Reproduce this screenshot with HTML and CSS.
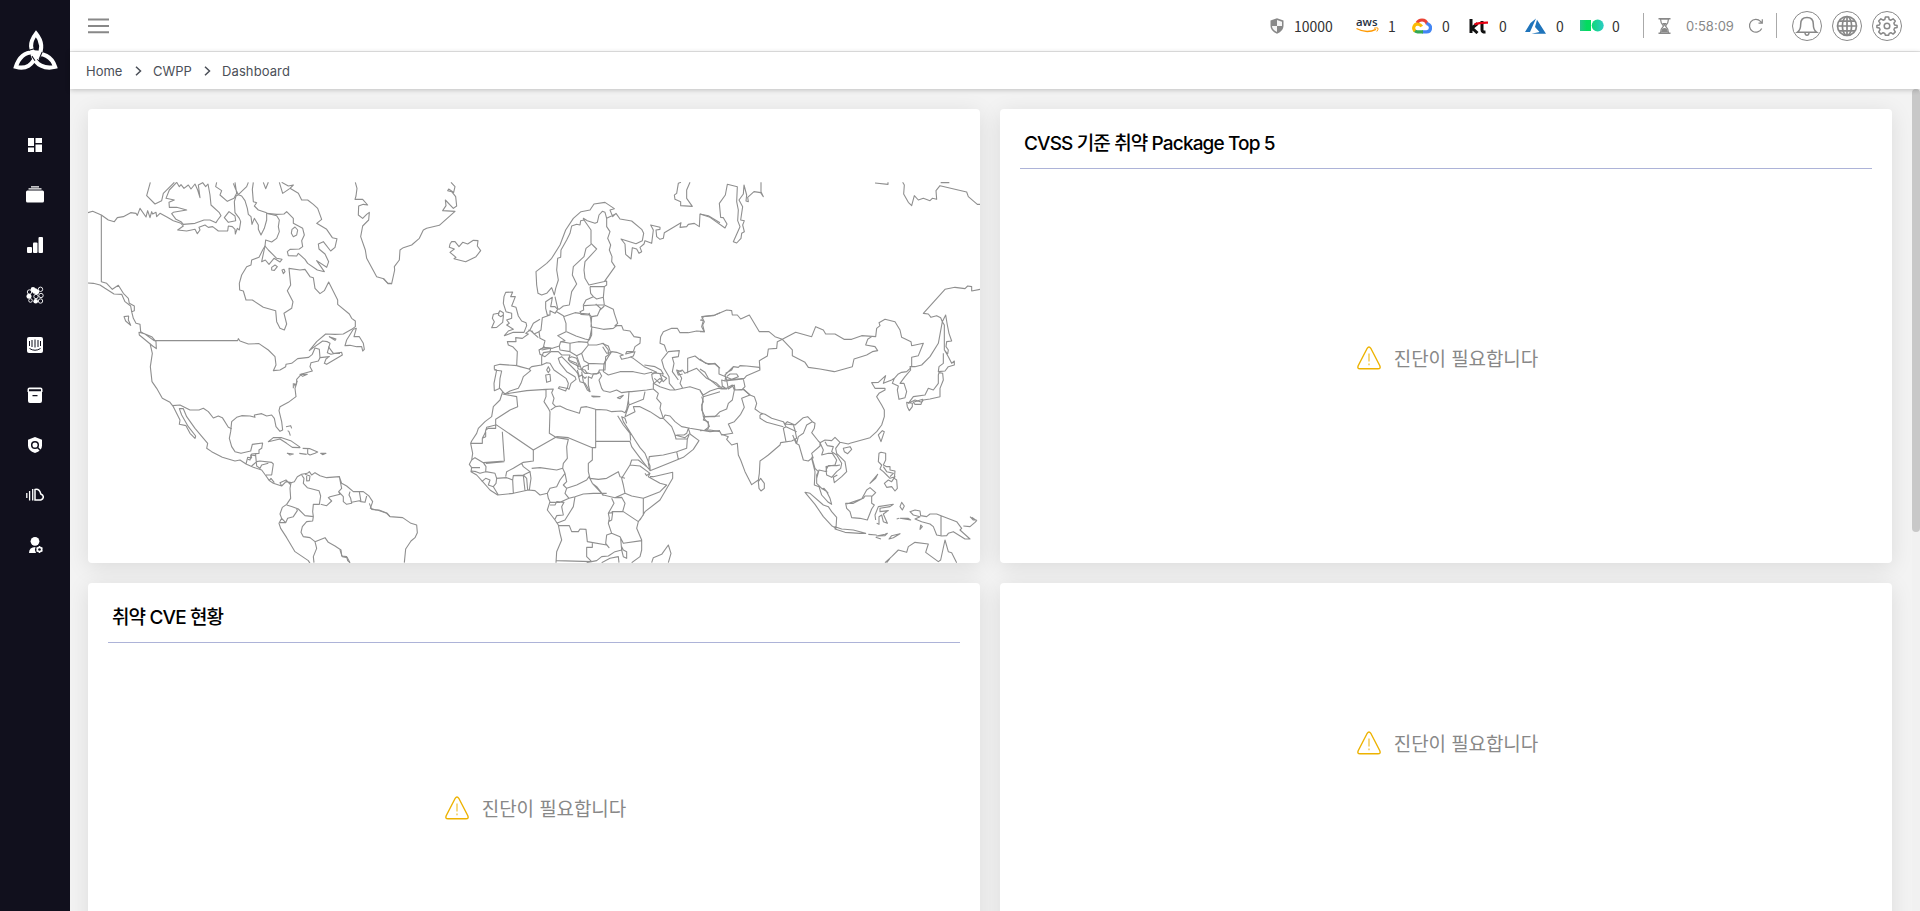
FILE: index.html
```html
<!DOCTYPE html>
<html lang="ko">
<head>
<meta charset="utf-8">
<title>CWPP Dashboard</title>
<link rel="stylesheet" href="styles.css">
</head>
<body>
<div class="app">
  <aside class="sidebar">
    <svg class="logo" viewBox="0 0 44 40" fill="none" stroke="#fff" stroke-width="4">
      <path d="M22.500 3.500C16 12 15.500 20 24.500 26.500C29 19 28.500 11 22.500 3.500Z" stroke-linejoin="miter"/>
      <path d="M2.800 36C12 38.500 20 35 23.500 22C13 20.500 6 26 2.800 36Z"/>
      <path d="M41.200 36C38 26 29 21 19.500 25C22 34 31 38.500 41.200 36Z"/>
      <path d="M15.500 19.800L21 18.200M28.500 21.500L25.500 28.500M21.500 30L18.500 25.500" stroke="#11101d" stroke-width="1"/>
    </svg>
    <nav class="nav">
      <svg viewBox="0 0 18 18"><path d="M2 2h6v8H2zM9.500 2H16v5H9.500zM2 11.500h6V16H2zM9.500 8.500H16V16H9.500z"/></svg>
      <svg viewBox="0 0 18 18"><path d="M5 .3h8v1.200H5zM2.500 2.300h13v1.300h-13z"/><rect y="4.600" width="18" height="12" rx="1.500"/></svg>
      <svg viewBox="0 0 18 18"><rect x="1" y="11" width="5" height="6" rx="1"/><rect x="7" y="6.500" width="4.500" height="10.500" rx="1"/><rect x="12.500" y="1" width="4.500" height="16" rx="1"/></svg>
      <svg viewBox="0 0 18 18"><g stroke="#fff" stroke-width=".9" fill="none"><circle cx="3.500" cy="6" r="2.200"/><circle cx="14.500" cy="3.300" r="2.200"/><circle cx="15" cy="9.500" r="2.200"/><circle cx="10" cy="10.500" r="2.200"/><circle cx="14.500" cy="15" r="2.200"/><circle cx="4.500" cy="14.500" r="1.800"/></g><circle cx="7" cy="3.300" r="2.300"/><circle cx="3" cy="10.300" r="2.500"/><circle cx="10.700" cy="5.700" r="2.500"/><circle cx="9.700" cy="15.300" r="2.300"/><path d="M5 5l5-3 2 3-4 3z"/></svg>
      <svg viewBox="0 0 18 18"><rect x="1" y="1" width="16" height="16" rx="2"/><path d="M3.500 5v5M6 4v7M9 3.500v8M12 4v7M14.500 5v5M3.500 12.500q5.500 3.500 11 0" fill="none" stroke="#11101d" stroke-width="1"/></svg>
      <svg viewBox="0 0 18 18"><path d="M1.500 3.500q0-2 2-2h11q2 0 2 2V6H16v9q0 2-2 2H4q-2 0-2-2V6h-.500z"/><path d="M3 3.200h12v2H3zM6.500 9h5v1.200h-5z" fill="#11101d"/></svg>
      <svg viewBox="0 0 18 18"><path d="M9 1l7 2.700v6q0 5-7 7.300-7-2.300-7-7.300v-6z"/><circle cx="9" cy="9" r="3.300" fill="none" stroke="#11101d" stroke-width="1.500"/><path d="M11.300 11.300l4 4" stroke="#11101d" stroke-width="1.500"/></svg>
      <svg viewBox="0 0 18 18"><path d="M.800 7v5M3.600 5v9.500M6.700 3v11.500" fill="none" stroke="#fff" stroke-width="1.300"/><path d="M9 3.500q4.500-1 5.800 4.500 2.500 1 2.500 3t-2.500 3H9z" fill="none" stroke="#fff" stroke-width="1.500"/></svg>
      <svg viewBox="0 0 18 18"><circle cx="9" cy="5.300" r="4.400"/><path d="M3 17q0-6 6.500-6-1.500 3 .5 6z"/><circle cx="13.500" cy="13.500" r="2.300" fill="none" stroke="#fff" stroke-width="1.500"/><path d="M13.500 10v7M10.500 11.700l6 3.500M10.500 15.300l6-3.500" stroke="#fff" stroke-width="1.200"/><circle cx="13.500" cy="13.500" r="1.200" fill="#11101d"/></svg>
    </nav>
  </aside>

  <div class="main">
    <header class="topbar">
      <svg class="burger" viewBox="0 0 21 16"><path d="M0 1.500h21M0 8h21M0 14.300h21" stroke="#888" stroke-width="2"/></svg>
      <div class="status">
        <svg class="shield" viewBox="0 0 14 16"><path d="M7 .3L13.500 2.500V8q0 5-6.500 7.700Q.500 13 .500 8V2.500z" fill="#888"/><path d="M7 2l5 1.700V8H7zM2 8h5v6Q2 11.500 2 8z" fill="#f4f4f4"/></svg>
        <span class="count total">10000</span>
        <svg class="aws" viewBox="0 -5 23 26"><text x="0" y="8" textLength="21.500" lengthAdjust="spacingAndGlyphs" class="aws-text">aws</text><path d="M.500 10.500q10 5.500 19.500.8" fill="none" stroke="#f90" stroke-width="1.400"/><path d="M18 10.200q3.500-.8 4 0t-1.200 3.300" fill="none" stroke="#f90"/></svg>
        <span class="count n1">1</span>
        <svg class="gcp" viewBox="0 0 20 16" fill="none" stroke-width="3.200"><path d="M5 5Q6.500 2 10 2q4 0 5.200 4" stroke="#ea4335"/><path d="M14.500 5.500q4 1 4 4.300 0 4-4 4H10" stroke="#4285f4"/><path d="M11 13.800H5.500q-2 0-3-1.200" stroke="#34a853"/><path d="M3 13Q1 11 2 8.500q1.200-3 4.500-2.300 2 .4 3.200 2.300" stroke="#fbbc05"/></svg>
        <span class="count n2">0</span>
        <svg class="kt" viewBox="0 0 20 16" fill="none"><path d="M2 1v14M8.500 5.500L3 10l5.500 5M13 3v9q0 2.200 3.500 2" stroke="#111" stroke-width="3"/><path d="M5.500 6.500q5-2 13.500-1.800" stroke="#e60012" stroke-width="2.200"/></svg>
        <span class="count n3">0</span>
        <svg class="azure" viewBox="0 0 21 16" fill="#1f74bb"><path d="M11 .5L5.500 5 0 14h5zM12 1.800l9 14H6.500l8-1.800-4.500-5z"/></svg>
        <span class="count n4">0</span>
        <svg class="ncp" viewBox="0 0 24 13"><defs><linearGradient id="g1"><stop stop-color="#29c58c"/><stop offset=".6" stop-color="#03dc5f"/></linearGradient><linearGradient id="g2"><stop stop-color="#10d877"/><stop offset="1" stop-color="#2accc4"/></linearGradient></defs><rect y="1" width="11" height="11" fill="url(#g1)"/><circle cx="17.700" cy="6.500" r="6" fill="url(#g2)"/></svg>
        <span class="count n5">0</span>
        <i class="rule"></i>
        <svg class="glass" viewBox="0 0 13 16"><path d="M.500.8h12M.500 15.200h12" stroke="#888" stroke-width="1.400"/><path d="M2.500 1Q2.500 5 5.500 8 2.500 11 2.500 15h8q0-4-3-7 3-3 3-7z" fill="none" stroke="#888" stroke-width="1.200"/><path d="M4 5h5L6.500 8zM3 14q.5-4 3.500-4t3.500 4z" fill="#888"/></svg>
        <span class="timer">0:58:09</span>
        <svg class="reload" viewBox="0 0 16 16" fill="none" stroke="#888" stroke-width="1.200"><path d="M13.700 10.500A6.400 6.400 0 1 1 12.500 3.300L14 5M14.300 1.300V5.200H10.500"/></svg>
        <i class="rule second"></i>
        <svg class="round" viewBox="0 0 30 30"><circle cx="15" cy="15" r="14.500"/><path d="M5.500 21.200Q8.700 19 8.700 13q0-6.500 6.300-6.500T21.300 13q0 6 3.200 8.200z" stroke-width="1.500"/><path d="M13 22q.3 2.200 2 2.200t2-2.200" stroke-width="1.500"/></svg>
        <svg class="round" viewBox="0 0 30 30"><circle cx="15" cy="15" r="14.500"/><g stroke-width="1.700"><circle cx="15" cy="15" r="9.500"/><ellipse cx="15" cy="15" rx="4.600" ry="9.500"/><path d="M5.500 15h19M15 5.500v19M7 10.200h16M7 19.800h16"/></g></svg>
        <svg class="round" viewBox="0 0 30 30"><circle cx="15" cy="15" r="14.500"/><circle cx="15" cy="15" r="2.800" stroke-width="1.500"/><path stroke-width="1.500" stroke-linejoin="round" d="M13.400 6h3.200l.6 2.500 1.700.7 2.200-1.400 2.200 2.200-1.400 2.200.7 1.700 2.500.6v1.900l-2.500.6-.7 1.700 1.400 2.200-2.200 2.200-2.200-1.400-1.700.7-.6 1.900h-3.200l-.6-1.900-1.700-.7-2.200 1.400-2.200-2.200 1.400-2.200-.7-1.700-2.500-.6v-1.900l2.500-.6.7-1.700-1.400-2.200 2.200-2.200 2.200 1.400 1.700-.7z"/></svg>
      </div>
    </header>

    <div class="crumbs">
      <span class="c1">Home</span>
      <svg viewBox="0 0 7 10"><path d="M1 .8L5.500 5 1 9.200"/></svg>
      <span class="c2">CWPP</span>
      <svg viewBox="0 0 7 10"><path d="M1 .8L5.500 5 1 9.200"/></svg>
      <span class="c3">Dashboard</span>
    </div>

    <div class="content">
      <div class="grid">
        <section class="card map-card">
          <svg class="map" viewBox="88 182 892 381">
            <!-- North and Central America -->
            <g transform="translate(80 170) scale(.33333)">
              <path d="M24,128 38,124 64,135 85,150 103,155 112,143 130,140 152,128 168,130 172,136 180,115 198,141 203,122 210,143 215,125 218,132 228,127 230,140 240,130 262,142 280,152 303,160 310,168 293,180 320,183 345,178 352,191 360,180 357,172 375,165 385,172 398,170 415,183 443,183 445,168 457,170 465,178 466,192 472,175 478,180 482,155 478,145 465,128 463,95 468,78 475,74 485,78 495,92 502,115 505,133 513,140 516,163 523,145 535,165 535,178 543,195 553,175 560,150 560,130 590,137 598,150 595,170 598,185 590,205 575,216 557,210 555,228 548,240 537,262 515,270 513,285 500,290 485,315 478,340 479,360 490,363 498,390 517,390 550,412 587,422 590,455 600,475 613,480 620,462 612,430 635,415 639,395 622,362 632,345 627,295 660,300 675,298 690,320 700,323 705,355 720,371 733,362 746,336 773,390 773,403 808,432 815,445 826,453 826,470 815,478 790,492 765,493 737,492 710,515 688,542 700,533 728,513 742,515 750,520 742,548 753,553 768,550 785,547 787,555 740,583 733,580 738,567 748,560 720,563 715,573 693,578 690,590 697,603 665,612 650,628 650,640 645,655 648,680 625,697 600,710 597,722 605,755 608,780 600,784 588,770 583,745 575,735 560,738 545,731 523,735 525,742 510,738 485,737 470,742 455,755 452,785 448,805 455,830 465,845 483,850 512,843 517,823 548,819 545,835 537,840 537,850 515,852 510,870 503,868"/>
              <path d="M64,135V335L80,340 97,358 115,346 130,370 145,385 148,400 163,408 163,422 155,425 152,408 135,395 125,373 102,372 75,355 60,345 40,340 24,339M155,425 160,445 168,460 180,463 182,485 190,490 215,500 228,515 229,536 218,528 178,495 177,487 195,492 222,512H473L475,506 480,513 505,522 537,521 565,540 585,560 588,585 580,602 600,600 617,590 618,583 635,580 653,566 686,562 697,553 705,534 718,538 720,563M132,440 146,438 145,450 152,466 137,453ZM210,520 217,550 211,590 216,635 230,655 247,685 270,697 280,710 300,750 298,763 318,767 330,790 345,805 347,798 325,770 305,735 298,716 310,716 320,740 345,775 383,820 380,835 395,845 427,862 465,873 480,870 498,882 520,892 545,900 556,915 568,932 580,940 605,948 618,935 633,938 643,935 652,920 665,913 682,910M278,707 300,705 330,720 357,720 370,715 385,725 400,744 415,738 427,743 445,772 455,776M498,882 503,862 515,864 512,855 527,857 527,850M515,888 530,875 540,873 575,877 580,882 575,915 558,915M527,857 530,888 540,895 545,885 565,880M568,932 573,925 583,938M605,948 600,938 618,930 632,945"/>
              <path d="M211,37 200,77 225,102 245,92 250,70 283,37M290,37 268,60 258,85 283,90 267,97 268,112 290,112 320,120 280,127 275,131 288,148 303,155 310,163 345,160 372,150 390,150 408,158 413,150 423,137 418,128 393,105 390,75 384,42 377,50 368,38 355,45 360,83 353,60 345,42 333,57 325,45 312,55 303,44 298,50 290,37M410,37 407,50 425,62 420,75 442,94 462,85 470,70 465,37M475,74 467,58 460,40M475,74 500,50 505,37M520,37 517,58 520,95 530,98 523,108 535,120 560,128M550,37 557,56 565,37M598,37 608,70 630,55 640,45 625,48 605,37M630,55 655,70 665,90 683,90 700,103 713,115 725,148 710,160 740,178 757,203 771,206 765,232 752,243 730,215 715,222 717,237 735,252 746,275 740,292 710,272 733,305 712,300 683,280 675,268 655,250 650,258 625,257 622,245 630,238 658,237 668,230 665,212 673,195 668,175 640,160 640,145 620,125 612,132 590,133 560,130M636,178 645,171 653,180 650,195 640,200 634,190ZM433,143 447,125 465,138 467,152 445,157ZM555,228 565,240 590,265 606,268 600,276 582,265 567,283 556,270 545,275ZM575,292 585,285 592,290 583,301 575,300ZM606,300 612,298 615,305 610,311Z"/>
              <path d="M826,37 831,55 828,78 825,88 848,88 863,105 850,103 836,108 835,135 848,145 860,133 868,127 866,150 848,168 842,200 856,240 860,265 890,320 911,326 923,339 936,341"/>
              <path d="M820,478 829,475 822,500 838,500 850,520 853,538 848,543 845,530 830,530 810,526 795,527 800,510ZM748,500 768,507 765,511ZM745,530 760,550 780,550M640,640 640,655M652,632 645,648 643,640M565,815 580,803 605,803 632,812 658,830 660,833 637,832 620,820 600,807ZM618,770 632,767 635,775M623,782 627,785 631,797M622,850 640,852 630,855ZM658,850 680,853M668,835 690,836 713,846 705,850 690,855 683,851 683,836M722,850 738,850 728,854ZM660,613 682,613 668,619Z"/>
              <!-- Northern part of South America -->
              <path d="M633,938 630,955 632,985 620,1003 607,1012 600,1032 605,1045 597,1060 602,1075 620,1103 645,1145 685,1172 690,1180M682,910 688,905 695,915 705,908 720,917 740,923 778,920 785,940 800,948 820,965 850,965 867,978 878,995 871,1015 888,1020 897,1020 922,1030 930,1040M665,915 672,925 670,940 682,953 717,962 722,978 718,1003 700,1003 698,1025 700,1040 675,1037 655,1017 637,1010 620,1005M605,1045 617,1058 623,1045 640,1040 652,1022 650,1017M675,913 690,918 688,932 680,933 680,918M778,920 785,955 776,965 780,973 750,980 745,983 755,993 740,1007 722,1003M776,965 790,980 790,995 800,1003 815,1000 812,985 807,975 810,965M815,997 838,992 843,995 855,997 860,978M838,965 843,995M700,1040 698,1053 680,1055 667,1070 663,1087 670,1100 690,1103 705,1115 735,1103 745,1117 765,1128 783,1140 785,1158 800,1160 803,1172 810,1178M705,1115 710,1135 700,1160 702,1178M600,1058 617,1058"/>
            </g>
            <!-- Greenland, Iceland, Brazil -->
            <g transform="translate(340 170) scale(.33333)">
              <path d="M130,326 144,341 155,341 164,300 163,290 178,270 180,240 190,233 215,225 238,205 250,180 260,175 298,166 345,124 308,122 318,107 316,90 340,115 350,108 347,80 335,65 323,62 326,57 341,67 345,50 333,37M330,222 335,215 345,215 357,230 368,217 383,222 400,211 414,212 412,228 422,242 408,260 377,275 342,266 348,262 330,247 343,237 328,232Z"/>
              <path d="M88,1000 95,1018 112,1020 140,1030 150,1040 188,1043 213,1060 230,1065 232,1088 225,1103 213,1113 197,1137 193,1178M0,1140 7,1160 22,1163 30,1178"/>
            </g>
            <!-- Europe and Africa -->
            <g transform="translate(460 170) scale(.33333)">
              <path d="M433,335 465,290 455,275 456,260 448,240 452,225 443,205 450,185 440,170 440,145 435,127 427,124 417,135 412,157 405,160 382,152 370,145 372,150 362,152 360,165 350,163 335,168 330,190 320,210 303,240 302,262 293,265 290,300 295,330 287,355 283,375 275,353 260,370 245,375 234,370 230,345 228,305 260,280 275,265 300,225 317,180 340,145 363,125 390,120 402,102 435,97 463,116 450,120 458,140 468,130 480,147 515,153 545,178 551,190 547,212 528,221 483,207 495,222 497,253 513,267 517,233 530,237 537,250 545,245 540,232 552,222 555,212 575,220 580,180 572,165 600,172 600,178 588,180 590,200 600,208 610,205 613,188 663,158 660,172 680,170 685,163 703,160 718,170 720,132 745,137 780,158M372,150 393,180V220L410,237 375,275 372,300 375,325 387,345 440,333 440,345 433,350 430,382 433,405 460,418 463,430 473,460 465,467 485,467 490,480 510,483 522,500 541,503 540,520 525,530 520,545M440,145 465,133M393,223 378,235 372,260 340,290 337,315 350,342 335,365 328,405 310,408 297,418 293,415 285,380M390,350 433,350M390,350 392,370 400,380 378,390 370,405 371,420 360,425 363,430 385,432M400,380 410,387 430,382M372,407 405,405 433,405 M407,402 422,415 412,437 395,440 385,432M433,408 420,420"/>
              <path d="M257,395 277,382 275,395 272,410 285,410 293,418 285,430 270,422 270,435 262,435 257,415ZM270,435 247,443 243,480 237,485 240,505 255,512 250,532 277,535 298,528 302,515 315,512 293,497 318,485 318,460 310,437 290,425M310,440 345,428 360,430 363,433 385,435 388,430 392,445 395,473 395,495 388,510 375,507 348,498 320,485M395,440 393,470 430,478 460,475 472,465M395,475 390,500 383,517 355,515 330,520 302,515M383,517 385,525 410,525 430,520 445,540 445,555 437,560 435,600 418,600 415,610 395,612 380,608 375,600 355,597 350,580 325,570 330,555 305,555 295,545 273,545 255,560 240,553 237,540 255,530M330,520 330,545 350,557 365,550 385,525M298,528 300,540 330,545M365,550 372,572 385,580 432,582 437,570M350,557 358,580 365,600 370,590 385,585M385,580 385,600"/>
              <path d="M520,545 500,545 497,552 525,545 520,558 505,563 485,568 480,558 490,555 470,547 455,545 445,560 432,582 430,605 445,615 480,605 520,605 553,612 575,607 578,612 590,607 575,600 553,590 540,580 520,565 510,560M425,520 445,528 452,548 440,550 428,530M553,585 585,590 603,600 610,612 595,610 580,608M575,612 577,625 582,640 600,625 610,635 620,625 605,615M583,625 600,640M600,612 607,630 597,640M418,605 425,618 417,630 425,655 430,662 450,667 470,660 485,668 507,665 515,665 560,660 580,657 580,640M418,605 410,612 400,612 395,625 385,620 385,645 390,665 382,660 370,635 365,605"/>
              <path d="M130,400 132,380 137,367 158,366 152,380 166,380 155,408 168,412 175,438 185,453 198,458 200,467 192,487 160,487 133,497 145,483 160,478 140,465 148,460 140,450 155,445 155,430 138,425ZM120,422 130,428 130,440 128,457 110,472 95,473 103,455 97,445 100,433 115,430ZM118,425 115,435 122,440 130,435"/>
              <path d="M240,448 220,460 210,480 197,490 205,492 187,505 167,503 168,515 142,515 145,525 158,530 172,545 170,587 180,590 207,597 212,602 190,620 183,640 175,655 150,663 135,672 128,665 120,655 103,662 102,640 110,600 103,598 103,587 120,583 172,587M103,600 125,603 120,625 118,657M205,480 213,483 235,503M215,482 222,492 237,485M237,540 250,533 272,535 270,545 250,548 245,560 245,585 260,578 270,580 282,600 318,625 325,640 322,655 327,658 333,640 348,628 345,620 320,605 300,580 295,565 305,560 320,575 345,600 353,610 360,635 375,640 390,665M172,587 207,597 215,590 245,585M298,650 320,655 317,663 295,655ZM257,615 270,613 272,633 260,637ZM265,590 270,600 265,608 260,600ZM325,565 330,575 352,587 358,590 350,565 335,560ZM352,600 358,620 365,615 375,625 380,620M365,600 375,610 385,610M395,678 420,680 400,681ZM472,683 490,676 480,686ZM245,540 272,535"/>
              <path d="M128,665 120,690 100,710 95,740 75,755 55,775 50,790 35,813 32,820H67V805L77,800V780L85,775H107V763L220,840 290,800 325,803 397,833H407V718M128,672 170,680 173,710 150,720 107,748V763M67,805 75,790 80,772 107,765M135,672 200,662 258,658 258,680 252,695 265,715 270,725 268,790 290,803M258,658 280,657 275,668 282,685 278,700 287,710 272,720M287,710 300,708 320,718 358,730 363,712 380,710 407,718 440,720 455,725 485,723M407,718V815M407,814H510L515,830 530,850 560,890 570,900M397,833 397,870 385,880 385,905 390,925M485,723 495,728 500,718 505,690 507,665M473,737 490,765 510,790 512,812M490,755 503,775 525,810 540,833 555,850 570,888 570,900M490,755 485,740 495,745 500,760M505,690 507,705 550,688 555,665M507,705 495,740 525,725 520,710 540,710 570,725 600,745 610,745 600,715 603,700 590,685 595,670 580,657"/>
              <path d="M610,745 615,735 630,738 645,755 665,770 690,775 750,785 780,782M610,745 635,770 645,795 675,803 690,790 685,775 680,790 672,795 650,795M645,795 648,807 682,807 687,795M690,792 717,812 700,838 670,862 650,870 600,890 570,902 565,880 568,860 610,855 650,845 680,835 682,807M650,845 655,868M580,640 600,650 630,660 645,660 668,655 690,650 720,660 730,680 727,700 725,720 735,740 730,750 745,755 745,775 738,782M735,740 780,738M730,680 780,665M668,655 660,640 665,625 655,605 667,600 675,610 710,595 725,610 740,625 770,640 780,650M683,610V565L705,558 720,570 745,583 765,580 780,595M665,605 650,600 655,615 668,612 M645,660 628,640 627,620 612,595 605,570 625,545 658,542 655,560 637,563 642,580 637,605 655,630"/>
              <path d="M620,545 613,525 600,520 602,500 610,485 635,475 652,475 660,488 685,488 710,483 733,485 728,465 733,455 725,440 760,437 780,428M643,75 650,70 655,40 663,37M643,75 645,88 662,95 662,107 697,109 680,85 680,60 690,37"/>
              <path d="M32,820 38,850 35,870 28,883 35,893 33,905 50,915 68,935 90,960 113,975 160,970 205,960 225,962 240,975 262,970 265,985 270,995 262,1020 285,1050 295,1065 300,1090 305,1110 290,1145 288,1178M35,870 45,863 70,878 78,890 77,905 60,910 48,905 35,903M35,893H60M70,878 133,873 127,785M133,875 78,880M77,905 105,910 110,925 108,940 100,950 115,975M65,935 77,925 90,930 85,945 100,950M108,925 140,923 158,930 160,970M137,920 140,905 160,895 185,880 190,890 210,905 190,915 160,917 158,930M185,880 190,877 220,873 220,840M160,917H190L195,962M190,915 200,925 203,960M210,905 213,925 208,960M215,895 240,893 290,900 308,895 315,910 300,930 290,950 270,955 262,970M290,803 325,808 320,830 322,865 310,880 308,895M315,910 320,935 310,945 320,955 315,970 327,985 300,997H270M320,955 350,945 380,930 387,920 397,940 425,970 430,977M327,985 345,980 370,972 400,970 440,970M390,925 415,928 440,925 475,905 480,920 495,925M345,980 340,1010 315,1050 290,1060M270,1005H285L290,995 312,997 305,1010 310,1035 290,1037 285,1048M397,940 410,950 430,975 465,983 495,970 490,945 485,925 510,885 515,870 535,870 560,890M510,885 540,888 570,910 565,920 600,940 620,945 600,965 550,985 515,978 495,970M570,920 580,920 638,907 638,925 600,990 555,1025 540,1050M555,910 560,917 568,910M550,985V1035L535,1055 490,1025 455,1025M455,985 462,1000 445,1030 448,1045 445,1060 455,1090 440,1095 437,1120 447,1133M465,983 485,982 495,1000 488,1025M445,1030 458,1028 455,1050 445,1055M535,1055 530,1075 545,1110 545,1140 540,1160 515,1178M455,1090 480,1100 490,1120 545,1112M295,1067H328L335,1085 355,1085 360,1077 378,1078 382,1115 440,1125 447,1133 437,1120M397,1117V1132H380V1160L395,1175 290,1172M380,1178 410,1172 425,1160 445,1158 465,1145 485,1140 482,1105M485,1130 490,1140 500,1145 500,1165 490,1160 485,1140M425,1178 450,1165 475,1160 477,1178M575,1178 580,1163 605,1153 625,1125 633,1150 625,1178"/>
            </g>
            <!-- Asia and Oceania -->
            <g transform="translate(700 170) scale(.33333)">
              <path d="M0,132 30,142 75,174 81,162 70,143 62,142 58,100 76,75 82,43 112,50 110,95 115,120 113,152 120,170 100,215 110,219 123,205 125,190 133,185 128,165 133,152 122,150 128,110 117,90 130,72 132,45 140,75 138,93 145,95 143,82 162,65 182,68 190,80 183,65V37M525,39 564,43V37M608,37 613,45 611,72 625,97 635,107 643,77 655,90 670,85 690,92 697,85 710,88 708,62 720,47 800,66 805,80 832,103 840,103M722,38H748"/>
              <path d="M840,358 815,363 815,350 803,348 795,356 765,352 735,358 670,430 685,432 693,442 710,437 722,443 727,455 737,435 742,465 747,490 755,513 740,515 738,530 745,540 743,552 733,540 733,465 727,455 715,520 690,560 665,585 645,590 630,590 632,600 615,620 600,640 612,640 620,665 615,683 597,688 592,660 595,648 577,640 583,625 575,630 550,640 557,617 535,637 515,638 525,655 555,655 555,660 537,670 530,680 545,705 553,720 553,740 545,765 530,785 510,803 450,820 M583,625 595,612 605,607 620,605 633,593M635,590 635,562 655,557 670,520 635,527 633,515 605,502 600,480 585,455 555,448 537,458 540,467 530,475 527,500 485,497 455,508 432,508 405,492 377,492 370,480 347,470 335,500 287,487 247,508 277,540 277,557 315,577 325,592 360,597 403,605 457,590 462,567 500,555 517,545 533,542 525,530 497,525 503,508 515,500 M0,485 13,485 5,470 10,452 0,450M5,450 10,440 45,435 80,420 95,422 97,435 112,435 122,447 148,435 178,485 207,485 225,500 247,508 232,515 230,535 205,537 202,558 178,572 180,600 140,617 133,625 80,630 75,615 100,590 115,592 120,587 140,588 178,592 180,600M0,567 17,580 45,582 57,593 57,612 77,620 75,633 65,630 67,648 80,657 65,657 55,655 30,663 10,675 0,662M0,597 15,607 25,625 55,650 67,652M80,620 90,612 110,612 115,620 95,628 80,622M100,590 95,600 77,610M75,633 130,627 135,650 125,660 105,660 103,645 85,657 80,630M55,655 80,655 97,645 103,660 130,658 150,675 125,685 133,712 122,733 103,755 85,762 98,790 65,795 60,785 30,780 0,782M103,660 97,690 85,700 80,717 60,725 45,740 10,740 5,705 10,695 5,680M10,740 12,745 25,760 28,770 12,782"/>
              <path d="M65,793 85,800 80,808 95,825 112,820 115,855 122,870 135,905 155,944 175,930 178,910 180,873 205,855 240,825 242,818 275,813 290,805 285,780 280,765M130,657 150,675 163,680 170,700 165,717 180,728 195,733 215,745 250,755 255,762 285,765 310,743 323,740 337,755 320,765 310,790 295,800 290,820 285,805M180,735 190,730M180,735 180,745 200,757 250,770M250,755 258,770 250,775 258,815M258,770 290,785M255,762 262,755 285,765M278,795 288,820 297,825 310,870 325,873 335,865 345,905 343,945 357,950 365,975 385,997 395,1003 390,985 380,965 365,955 350,940 350,915 355,905 345,895 335,860M337,755 345,760 343,775 335,788 355,813 360,818 375,810 395,812 405,802 420,817 445,822 450,820M360,818 360,828 335,850 340,865M360,818 370,840 365,855 385,850 397,850 410,870 405,885 378,890 380,905 357,900 350,925M375,815 382,827 400,830 395,845 410,855 425,880 422,895 410,905 395,922 380,915 378,900 385,887 410,887 420,885M420,817 407,835 410,850 435,875 440,905 425,920 403,938 400,922 412,915M430,835 450,830 455,838 443,851 433,845ZM175,935 182,925 193,940 193,955 183,963 177,955ZM535,795 547,782 553,785 543,815ZM365,957 372,955 385,970"/>
              <path d="M735,542 745,560 755,580 763,573 763,585 745,590 735,603 715,605 717,590 730,580 730,550M717,608 728,610 730,630 720,655 720,680 690,687 670,690 665,697 645,690 625,700 640,680 675,675 685,655 700,660 715,640 715,615ZM620,697 637,700 637,710 628,722 622,710ZM640,697 668,688 663,703 645,703Z"/>
              <path d="M537,850 543,847 557,850 557,870 550,885 560,890 570,890 570,900 585,903 583,925 590,930 592,955 585,963 575,950 560,952 553,940 565,930 575,935 585,920 570,925 560,915 550,905 540,897 545,885 535,875ZM550,890 560,905 580,910 570,920M533,913 510,940 527,925ZM315,967 330,970 370,1005 385,1010 395,1025 410,1042 408,1075 395,1067 370,1040 345,1003ZM405,1070 425,1077 460,1080 497,1090 480,1090 435,1087 405,1077ZM437,1000 460,1000 485,987 500,960 510,953 527,968 515,980 515,1000 523,1005 515,1017 502,1050 480,1045 455,1043 450,1025 440,1015ZM440,1002 490,985 495,978 515,978M527,1050 525,1035 535,1010 580,1003 570,1010 540,1015 540,1025 565,1022 550,1032 562,1060 550,1055 545,1035 537,1040 537,1063 530,1060M605,997 613,1008 607,1020 600,1010ZM590,1047 597,1045M600,1045 625,1045 632,1050ZM505,1093 530,1095M530,1098 555,1093 562,1090 555,1097ZM527,1102 543,1107M567,1107 575,1097 600,1091 580,1103ZM630,1025 645,1020 660,1023 662,1037 680,1040 690,1032 710,1032 725,1038 770,1055 785,1075 780,1080 810,1107 795,1107 760,1085 745,1090 740,1097 725,1098 710,1095 700,1070 690,1062 665,1055 645,1047 660,1040 640,1035ZM723,1038V1098M790,1068 810,1070 825,1057 830,1052 815,1042M810,1040 820,1050 830,1050M662,1065 667,1070 660,1078ZM555,1178 575,1160 595,1140 620,1147 625,1130 645,1117 685,1122 677,1147 715,1175 722,1170 735,1110 745,1145 755,1148 770,1178M560,1178 570,1165"/>
            </g>
          </svg>
        </section>

        <section class="card">
          <h2><span class="t1">CVSS 기준 취약 Package Top 5</span></h2>
          <div class="empty e2"><svg viewBox="0 0 24 24"><path d="M10.200 2.300q1.800-2.600 3.600 0l9 17.500q1.200 3-1.800 3H3q-3 0-1.800-3z"/><path d="M12 7.500v8M12 17.500v1.800" opacity=".7"/></svg><span>진단이 필요합니다</span></div>
        </section>

        <section class="card">
          <h2><span class="t2">취약 CVE 현황</span></h2>
          <div class="empty e3"><svg viewBox="0 0 24 24"><path d="M10.200 2.300q1.800-2.600 3.600 0l9 17.500q1.200 3-1.800 3H3q-3 0-1.800-3z"/><path d="M12 7.500v8M12 17.500v1.800" opacity=".7"/></svg><span>진단이 필요합니다</span></div>
        </section>

        <section class="card">
          <div class="empty e4"><svg viewBox="0 0 24 24"><path d="M10.200 2.300q1.800-2.600 3.600 0l9 17.500q1.200 3-1.800 3H3q-3 0-1.800-3z"/><path d="M12 7.500v8M12 17.500v1.800" opacity=".7"/></svg><span>진단이 필요합니다</span></div>
        </section>
      </div>
      <div class="scrollbar"><div class="thumb"></div></div>
    </div>
  </div>
</div>
</body>
</html>
```

FILE: styles.css
```css
* { box-sizing: border-box; }

body {
  margin: 0;
  height: 911px;
  overflow: hidden;
  font-family: "Noto Sans CJK KR", sans-serif;
  font-size: 14px;
  color: #333;
  background: #f3f3f3;
}

.app { display: flex; height: 911px; }

.sidebar {
  width: 70px;
  flex: none;
  background: #11101d;
  display: flex;
  flex-direction: column;
  align-items: center;
}
.logo { width: 45px; height: 41px; margin-top: 30px; }
.nav { display: flex; flex-direction: column; gap: 32px; margin-top: 65px; }
.nav svg { width: 18px; height: 18px; fill: #fff; }

.main { flex: 1; min-width: 0; display: flex; flex-direction: column; }

.topbar {
  height: 52px;
  flex: none;
  display: flex;
  align-items: center;
  justify-content: space-between;
  padding: 0 18px;
  background: #fff;
  border-bottom: 1px solid #e6e6e6;
}
.burger { width: 21px; height: 16px; }
.status { display: flex; align-items: center; }
.status svg { flex: none; }
.shield { width: 14px; height: 16px; }
.count { line-height: 20px; white-space: nowrap; }
.total { width: 62px; margin-left: 10px; }
.aws { width: 23px; height: 26px; margin-right: 9px; }
.aws-text { font: 600 11px "Open Sans", sans-serif; fill: #252f3e; }
.n1 { width: 24px; }
.gcp { width: 20px; height: 16px; margin-right: 10px; }
.n2 { width: 27px; }
.kt { width: 20px; height: 16px; margin-right: 10px; }
.n3 { width: 26px; }
.azure { width: 21px; height: 16px; margin-right: 10px; }
.n4 { width: 24px; }
.ncp { width: 24px; height: 13px; margin-right: 8px; }
.n5 { width: 31px; }
.rule { width: 1px; height: 25px; background: #aaa; }
.glass { width: 13px; height: 16px; margin: 0 15px 0 14px; }
.timer { width: 62px; color: #888; font: 13px/20px Inter, sans-serif; }
.reload { width: 16px; height: 16px; }
.rule.second { margin: 0 15px 0 12px; }
.round { width: 30px; height: 30px; margin-right: 10px; fill: none; stroke: #888; }
.round:last-child { margin-right: 0; }

.crumbs {
  position: relative;
  z-index: 1;
  height: 37px;
  flex: none;
  display: flex;
  align-items: center;
  padding-left: 16px;
  background: #fff;
  color: #4b4f58;
  font: 13px/20px Inter, sans-serif;
  box-shadow: 0 1px 5px rgba(0, 0, 0, .22);
}
.crumbs svg { width: 7px; height: 10px; flex: none; fill: none; stroke: #4b4f58; stroke-width: 1.5; margin-right: 11px; }
.c1 { width: 49px; }
.c2 { width: 51px; }
.c3 { letter-spacing: .1px; }

.content { flex: 1; display: flex; min-height: 0; overflow: hidden; }
.grid {
  flex: 1;
  display: grid;
  grid-template-columns: 892px 892px;
  grid-auto-rows: 454px;
  gap: 20px;
  padding: 20px 18px;
}
.card {
  background: #fff;
  border-radius: 4px;
  box-shadow: 0 4px 22px rgba(0, 0, 0, .1);
}
.map-card { display: flex; align-items: flex-end; overflow: hidden; }
.map { display: block; width: 892px; height: 381px; fill: none; stroke: #8f8f8f; }
.map path { stroke-width: 3.3px; stroke-linejoin: round; }

h2 {
  height: 60px;
  margin: 0 20px;
  padding: 20px 4px 0;
  border-bottom: 1px solid #adb3d8;
  color: #000;
  font: 500 19px/30px Inter, "Noto Sans CJK KR", sans-serif;
  letter-spacing: -.86px;
}
.empty {
  display: flex;
  align-items: center;
  justify-content: center;
  gap: 13px;
  height: 32px;
  padding-left: 3px;
  color: #888;
  font-size: 19px;
  line-height: 32px;
  letter-spacing: -.1px;
}
.empty span { margin-top: -1px; }
.empty svg { width: 24px; height: 24px; fill: none; stroke: #edb200; stroke-width: 1.4; }
.e2 { margin-top: 173px; }
.e3 { margin-top: 149px; }
.e4 { margin-top: 144px; }

.scrollbar { width: 8px; flex: none; background: #f1f1f1; }
.thumb { height: 443px; border-radius: 4px; background: #c8c8c8; }
```
